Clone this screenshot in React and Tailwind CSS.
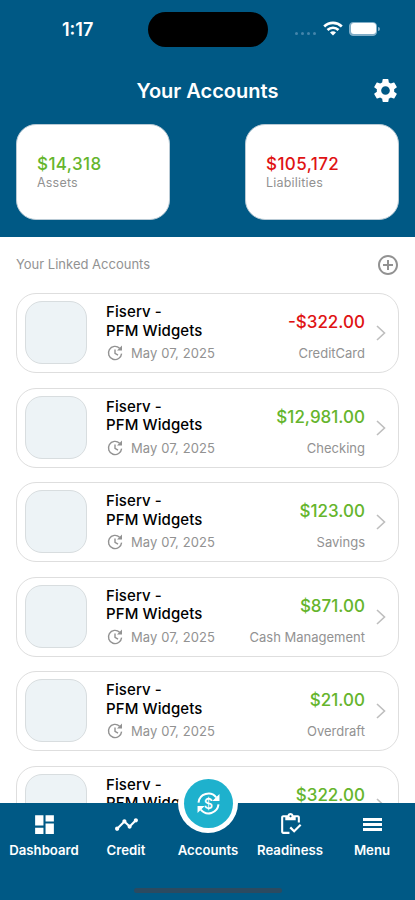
import {
  MdAddCircleOutline,
  MdDashboard,
  MdOutlineInventory,
  MdSettings,
  MdTimeline,
} from "react-icons/md";

const accounts = [
  { amount: "-$322.00", type: "CreditCard", negative: true },
  { amount: "$12,981.00", type: "Checking" },
  { amount: "$123.00", type: "Savings" },
  { amount: "$871.00", type: "Cash Management" },
  { amount: "$21.00", type: "Overdraft" },
  { amount: "$322.00", type: "" },
];

// heavier bars than the stock material menu icon
function MenuBars({ className }) {
  return (
    <svg className={className} viewBox="0 0 25 25" fill="currentColor">
      <path d="M3 6h19v3H3zM3 11h19v3H3zM3 16h19v3H3z" />
    </svg>
  );
}

// clock with a refresh arrow in the top right corner
function UpdatedIcon({ className }) {
  return (
    <svg className={className} viewBox="0 0 18 18" fill="none">
      <g stroke="currentColor" strokeWidth="1.4">
        <path d="M13.6 4.2A6.6 6.6 0 1 0 15.6 9.6" />
        <path d="M9 5.4v4l3 1.8" />
      </g>
      <path d="M16 1.6v5h-5z" fill="currentColor" />
    </svg>
  );
}

function ExchangeIcon({ className }) {
  return (
    <svg className={className} viewBox="0 0 26 26" fill="none">
      <g stroke="currentColor" strokeWidth="2.1">
        <path d="M2.6 12A10.4 10.4 0 0 1 21 6.6" />
        <path d="M23.4 14A10.4 10.4 0 0 1 5 19.4" />
      </g>
      <path d="M24.4 3v7.4H17zM1.6 23v-7.4H9z" fill="currentColor" />
      <text
        x="13"
        y="18.4"
        textAnchor="middle"
        fill="currentColor"
        className="text-[15px] font-medium"
      >
        $
      </text>
    </svg>
  );
}

const tabs = [
  { label: "Dashboard", icon: MdDashboard },
  { label: "Credit", icon: MdTimeline },
  { label: "Accounts", icon: null },
  { label: "Readiness", icon: MdOutlineInventory },
  { label: "Menu", icon: MenuBars },
];

function StatusBar() {
  return (
    <div className="flex h-[58px] items-center">
      <div className="w-[148px] pl-[62px] text-[18px] font-semibold">
        1:17
      </div>
      <div className="h-[35px] w-[120px] rounded-full bg-black" />
      <div className="flex items-center pl-[27px]">
        <div className="flex gap-[3px] pt-[9px]">
          {[0, 1, 2, 3].map((dot) => (
            <span key={dot} className="size-[3px] rounded-full bg-[#4485ab]" />
          ))}
        </div>
        <svg className="-mt-[2px] ml-[7px] h-[15px] w-[20px]" viewBox="0 0 20 15">
          <g fill="none" stroke="white" strokeWidth="2.7">
            <path d="M1.2 5.4C6.2.7 13.8.7 18.8 5.4" />
            <path d="M4.5 8.9c3.1-2.9 7.9-2.9 11 0" />
          </g>
          <path d="M10 14.4 7 11.4c1.7-1.6 4.3-1.6 6 0z" fill="white" />
        </svg>
        <div className="-mt-px ml-[6px] h-[14px] w-[28px] rounded-[4px] border border-[#80adc7] bg-[#80adc7] p-[0.5px]">
          <div className="h-full rounded-[3px] bg-white" />
        </div>
        <div className="ml-px h-[4px] w-[2px] rounded-r-full bg-[#80adc7]" />
      </div>
    </div>
  );
}

function SummaryCard({ amount, label, color }) {
  return (
    <div className="h-[96px] w-[154px] rounded-[20px] border border-[#b9cad5] bg-white pt-[29px] pl-[20px]">
      <p
        className={`text-[17px] leading-[21px] font-medium tracking-[0.4px] ${color}`}
      >
        {amount}
      </p>
      <p className="text-[12.5px] leading-[16px] tracking-[0.2px] text-[#929292]">
        {label}
      </p>
    </div>
  );
}

function AccountCard({ account }) {
  return (
    <div className="flex h-[80px] shrink-0 rounded-[20px] border border-[#dedede] bg-white pl-[8px]">
      <div className="mt-[7px] h-[63px] w-[62px] rounded-[17px] border border-[#d8dddf] bg-[#edf3f6]" />
      <div className="ml-[19px] pt-[9px]">
        <p className="text-[15px] leading-[18.5px] font-medium tracking-[0.1px] text-black">
          Fiserv -<br />
          PFM Widgets
        </p>
        <div className="mt-[4px] flex items-center gap-[7px] text-[#929292]">
          <UpdatedIcon className="size-[18px]" />
          <span className="text-[13px] leading-[16px] tracking-[0.1px]">
            May 07, 2025
          </span>
        </div>
      </div>
      <div className="ml-auto pt-[17px] text-right whitespace-nowrap">
        <p
          className={`text-[17px] leading-[22px] font-medium ${
            account.negative ? "text-[#df1313]" : "text-[#65b52c]"
          }`}
        >
          {account.amount}
        </p>
        <p className="mt-[12px] text-[13px] leading-[16px] text-[#929292]">
          {account.type}
        </p>
      </div>
      <svg
        className="mt-[31px] mr-[12px] ml-[11px] h-[16px] w-[10px]"
        viewBox="0 0 10 16"
        fill="none"
        stroke="#bebebe"
        strokeWidth="1.6"
      >
        <path d="m1 1 7.5 7L1 15" />
      </svg>
    </div>
  );
}

function TabBar() {
  return (
    <nav className="relative h-[97px] shrink-0 bg-[#005985] text-white">
      <div className="flex px-[3px]">
        {tabs.map(({ label, icon: Icon }) => (
          <div
            key={label}
            className="flex w-[82px] shrink-0 flex-col items-center pt-[9px]"
          >
            <div className="h-[25px]">
              {Icon && <Icon className="size-[25px]" />}
            </div>
            <span className="mt-[4px] text-[13.2px] leading-[18px] font-semibold">
              {label}
            </span>
          </div>
        ))}
      </div>
      <div className="absolute -top-[30px] left-[178px] flex size-[60px] items-center justify-center rounded-full bg-white">
        <div className="flex size-[49px] items-center justify-center rounded-full bg-[#1eb1cd]">
          <ExchangeIcon className="size-[25px]" />
        </div>
      </div>
      <div className="mx-auto mt-[29px] h-[5px] w-[148px] rounded-full bg-[#2b4a60]" />
    </nav>
  );
}

export default function App() {
  return (
    <div className="flex h-[900px] w-[415px] flex-col overflow-hidden bg-white font-['Inter',sans-serif]">
      <header className="h-[237px] shrink-0 bg-[#005985] text-white">
        <StatusBar />
        <div className="flex h-[66px] items-center justify-between pr-[15px] pl-[44px]">
          <h1 className="-mt-px flex-1 text-center text-[20px] font-semibold">
            Your Accounts
          </h1>
          <MdSettings className="-mt-[2px] size-[29px]" />
        </div>
        <div className="flex justify-between px-[16px]">
          <SummaryCard
            amount="$14,318"
            label="Assets"
            color="text-[#65b52c]"
          />
          <SummaryCard
            amount="$105,172"
            label="Liabilities"
            color="text-[#df1313]"
          />
        </div>
      </header>

      <main className="flex min-h-0 flex-1 flex-col overflow-hidden px-[16px]">
        <div className="flex h-[56px] shrink-0 items-center justify-between text-[#929292]">
          <h2 className="text-[13px]">Your Linked Accounts</h2>
          <MdAddCircleOutline className="-mr-px size-[24px]" />
        </div>
        <div className="flex flex-col gap-[14.6px]">
          {accounts.map((account, i) => (
            <AccountCard key={i} account={account} />
          ))}
        </div>
      </main>

      <TabBar />
    </div>
  );
}
